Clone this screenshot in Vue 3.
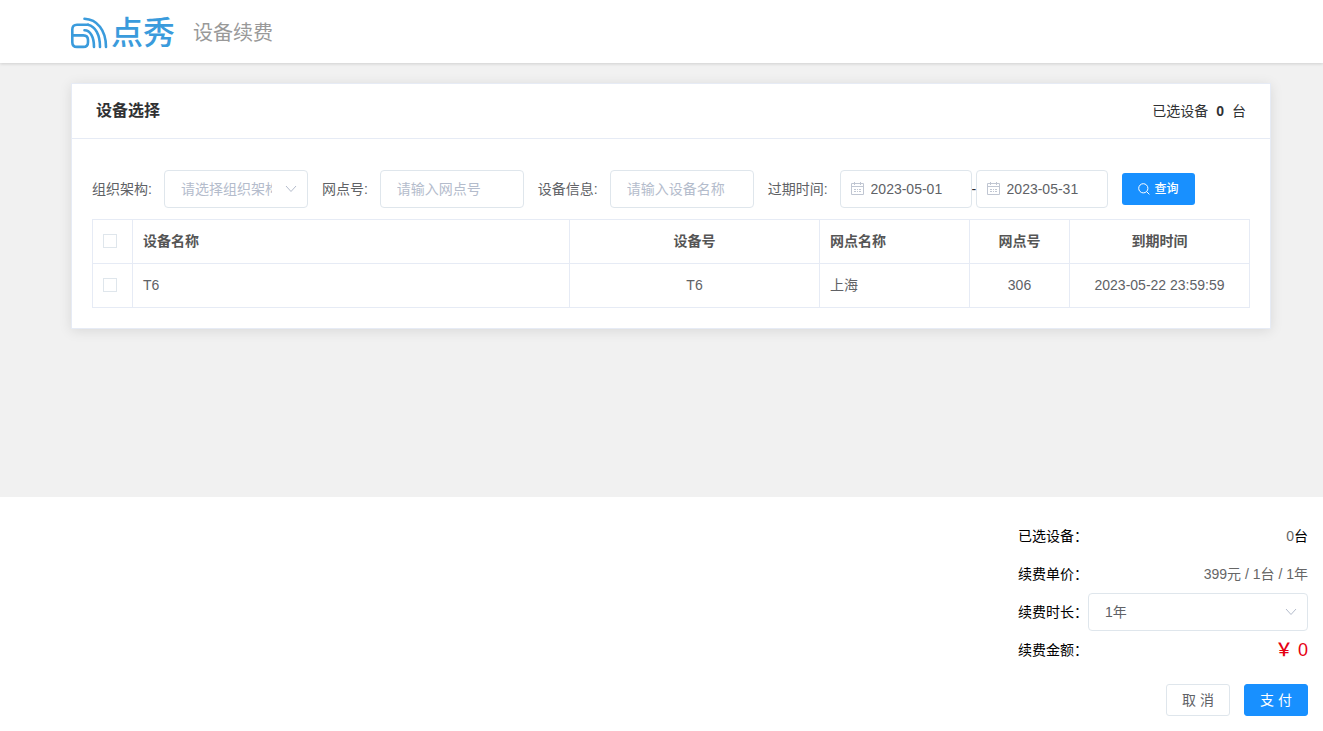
<script setup>
import { ref, computed } from 'vue'

const org = ref('')
const siteNo = ref('')
const deviceInfo = ref('')
const dateFrom = ref('2023-05-01')
const dateTo = ref('2023-05-31')
const years = ref(1)
const price = 399
const devices = [
  { id: 1, name: 'T6', code: 'T6', site: '上海', siteNo: '306', expires: '2023-05-22 23:59:59' }
]
const selected = ref([])
const allSelected = computed({
  get: () => selected.value.length === devices.length,
  set: (on) => { selected.value = on ? devices.map((d) => d.id) : [] }
})
const total = computed(() => selected.value.length * price * years.value)
</script>

<template>
  <div class="page">
    <header class="top">
      <div class="brand">
        <svg class="mark" viewBox="0 0 38 32" aria-hidden="true">
          <g fill="none" stroke="#3a9bdc" stroke-width="2.6" stroke-linecap="round">
            <path d="M18 7.7H7Q2.3 7.7 2.3 12.4V25.2Q2.3 29.9 7 29.9H13.3Q18 29.9 18 25.2V23.1Q18 18.4 13.3 18.4H2.6" />
            <path d="M14.5 1.8C27 2.4 36 13 36 29.9" />
            <path d="M18 7.7C25.4 9.4 30 17.5 30 29.9" />
            <path d="M14.5 13.3C20.3 13.3 24 20 24 29.9" />
          </g>
        </svg>
        <span class="brand-name">点秀</span>
      </div>
      <h1>设备续费</h1>
    </header>

    <main>
      <section class="card">
        <div class="card-head">
          <h2>设备选择</h2>
          <p class="count"><span>已选设备</span><b>{{ selected.length }}</b><span>台</span></p>
        </div>
        <div class="card-body">
          <form class="filters" @submit.prevent>
            <div class="field">
              <label for="org">组织架构:</label>
              <div class="select">
                <select id="org" v-model="org" class="control placeholder">
                  <option value="">请选择组织架构</option>
                </select>
                <svg class="chevron" viewBox="0 0 12 8" aria-hidden="true"><path d="M1 1l5 5.5L11 1" /></svg>
              </div>
            </div>
            <div class="field">
              <label for="site">网点号:</label>
              <input id="site" v-model="siteNo" class="control" type="text" placeholder="请输入网点号">
            </div>
            <div class="field">
              <label for="device">设备信息:</label>
              <input id="device" v-model="deviceInfo" class="control" type="text" placeholder="请输入设备名称">
            </div>
            <div class="field">
              <label for="from">过期时间:</label>
              <div class="date">
                <svg class="calendar" viewBox="0 0 13 13" aria-hidden="true">
                  <path d="M.5 1.5h12v11H.5zM.5 4.5h12M3.5 0v3M9.5 0v3" />
                  <path class="days" d="M3 7.5h2M6 7.5h1M8 7.5h2M3 9.5h2M6 9.5h1M8 9.5h2" />
                </svg>
                <input id="from" v-model="dateFrom" class="control" type="text">
              </div>
              <span class="dash">-</span>
              <div class="date">
                <svg class="calendar" viewBox="0 0 13 13" aria-hidden="true">
                  <path d="M.5 1.5h12v11H.5zM.5 4.5h12M3.5 0v3M9.5 0v3" />
                  <path class="days" d="M3 7.5h2M6 7.5h1M8 7.5h2M3 9.5h2M6 9.5h1M8 9.5h2" />
                </svg>
                <input v-model="dateTo" class="control" type="text" aria-label="过期时间">
              </div>
            </div>
            <button class="search" type="submit">
              <svg viewBox="0 0 12 12" aria-hidden="true"><circle cx="5.3" cy="5.3" r="4.6" /><path d="M8.6 8.6l2.8 2.8" /></svg>
              <span>查询</span>
            </button>
          </form>

          <table>
            <colgroup>
              <col class="c-check"><col><col class="c-code"><col class="c-site"><col class="c-no"><col class="c-time">
            </colgroup>
            <thead>
              <tr>
                <th class="check"><input v-model="allSelected" type="checkbox" aria-label="全选"></th>
                <th>设备名称</th>
                <th class="mid">设备号</th>
                <th>网点名称</th>
                <th class="mid">网点号</th>
                <th class="mid">到期时间</th>
              </tr>
            </thead>
            <tbody>
              <tr v-for="d in devices" :key="d.id">
                <td class="check"><input v-model="selected" type="checkbox" :value="d.id" :aria-label="d.name"></td>
                <td>{{ d.name }}</td>
                <td class="mid">{{ d.code }}</td>
                <td>{{ d.site }}</td>
                <td class="mid">{{ d.siteNo }}</td>
                <td class="mid">{{ d.expires }}</td>
              </tr>
            </tbody>
          </table>
        </div>
      </section>
    </main>

    <footer>
      <div class="summary">
        <div class="row"><span>已选设备：</span><span><span class="grey">{{ selected.length }}</span>台</span></div>
        <div class="row"><span>续费单价：</span><span class="grey">{{ price }}元 / 1台 / 1年</span></div>
        <div class="row">
          <label for="years">续费时长：</label>
          <div class="select wide">
            <select id="years" v-model="years" class="control">
              <option :value="1">1年</option>
              <option :value="2">2年</option>
              <option :value="3">3年</option>
            </select>
            <svg class="chevron" viewBox="0 0 12 8" aria-hidden="true"><path d="M1 1l5 5.5L11 1" /></svg>
          </div>
        </div>
        <div class="row"><span>续费金额：</span><span class="total"><span class="yen">￥</span> {{ total }}</span></div>
      </div>
      <div class="actions">
        <button class="btn" type="button">取 消</button>
        <button class="btn primary" type="button">支 付</button>
      </div>
    </footer>
  </div>
</template>

<style>
html,
body {
  margin: 0;
}
</style>

<style scoped>
.page,
.page * {
  box-sizing: border-box;
}
.page {
  display: flex;
  flex-direction: column;
  min-height: 100vh;
  background: #f1f1f1;
  color: #000;
  font: 14px/20px "Liberation Sans", "Noto Sans CJK SC", sans-serif;
}
h1,
h2,
p {
  margin: 0;
}
button,
input,
select {
  font: inherit;
}
.top {
  display: flex;
  align-items: center;
  height: 63px;
  padding: 2px 70px 0;
  background: #fff;
  box-shadow: 0 1px 3px rgba(0, 0, 0, 0.14);
}
.brand {
  display: flex;
  align-items: center;
  gap: 3px;
}
.mark {
  width: 38px;
  height: 32px;
}
.brand-name {
  color: #3a9bdc;
  font-size: 32px;
  font-weight: 500;
  line-height: 40px;
}
h1 {
  margin-left: 18px;
  color: #999;
  font-size: 20px;
  font-weight: 400;
  line-height: 28px;
}
main {
  flex: 1;
  padding: 20px 52px 20px 71px;
}
.card {
  border: 1px solid #e6ebf5;
  background: #fff;
  box-shadow: 0 2px 12px rgba(0, 0, 0, 0.1);
}
.card-head {
  display: flex;
  align-items: center;
  justify-content: space-between;
  height: 55px;
  padding: 0 24px;
  border-bottom: 1px solid #e6ebf5;
  color: #303133;
}
h2 {
  font-size: 16px;
  font-weight: 700;
}
.count {
  display: flex;
  gap: 8px;
}
.card-body {
  padding: 31px 20px 20px;
}
.filters {
  display: flex;
  align-items: center;
  gap: 14px;
  margin-bottom: 11px;
}
.field {
  display: flex;
  align-items: center;
  color: #606266;
}
.field label {
  padding-right: 12px;
  white-space: nowrap;
}
.control {
  display: block;
  width: 144px;
  height: 38px;
  padding: 0 16px;
  border: 1px solid #dfe6ec;
  border-radius: 4px;
  outline: 0;
  background: #fff;
  color: #606266;
}
.control::placeholder {
  color: #b4bccc;
  opacity: 1;
}
.select,
.date {
  position: relative;
}
select.control {
  appearance: none;
  padding-right: 35px;
}
.control.placeholder {
  color: #b4bccc;
}
.chevron {
  position: absolute;
  top: 15px;
  right: 11px;
  width: 12px;
  height: 8px;
  fill: none;
  stroke: #b4bccc;
  pointer-events: none;
}
.date .control {
  width: 132px;
  padding: 0 10px 0 30px;
}
.calendar {
  position: absolute;
  top: 12px;
  left: 11px;
  width: 13px;
  height: 13px;
  fill: none;
  stroke: #c0c6d2;
}
.dash {
  width: 4px;
  color: #303133;
}
.search {
  display: flex;
  align-items: center;
  justify-content: center;
  gap: 5px;
  width: 73px;
  height: 32px;
  padding: 0;
  border: 0;
  border-radius: 3px;
  background: #1890ff;
  color: #fff;
  font-size: 12px;
  font-weight: 500;
}
.search svg {
  width: 12px;
  height: 12px;
  fill: none;
  stroke: #fff;
}
table {
  width: 100%;
  border-collapse: collapse;
  table-layout: fixed;
  color: #606266;
}
.c-check {
  width: 40px;
}
.c-code {
  width: 250px;
}
.c-site {
  width: 150px;
}
.c-no {
  width: 100px;
}
.c-time {
  width: 180px;
}
th,
td {
  height: 44px;
  padding: 0 10px 2px;
  border: 1px solid #e6ebf5;
  text-align: left;
}
th {
  color: #555;
  font-weight: 700;
}
.mid {
  text-align: center;
}
.check input {
  display: block;
  appearance: none;
  width: 14px;
  height: 14px;
  margin: 0;
  border: 1px solid #dfe6ec;
  background: #fff;
}
.check input:checked {
  border-color: #1890ff;
  background: #1890ff;
}
footer {
  display: flex;
  flex-direction: column;
  align-items: flex-end;
  gap: 15px;
  padding: 20px 15px 15px;
  background: #fff;
}
.summary {
  width: 290px;
}
.row {
  display: flex;
  align-items: center;
  justify-content: space-between;
  height: 38px;
}
.wide .control {
  width: 220px;
}
.grey {
  color: #666;
}
.total {
  color: #e60012;
  font-size: 18px;
}
.yen {
  font-weight: 500;
}
.actions {
  display: flex;
  gap: 14px;
}
.btn {
  width: 64px;
  height: 32px;
  padding: 0;
  border: 1px solid #dfe6ec;
  border-radius: 3px;
  background: #fff;
  color: #606266;
}
.btn.primary {
  border-color: #1890ff;
  background: #1890ff;
  color: #fff;
}
</style>
